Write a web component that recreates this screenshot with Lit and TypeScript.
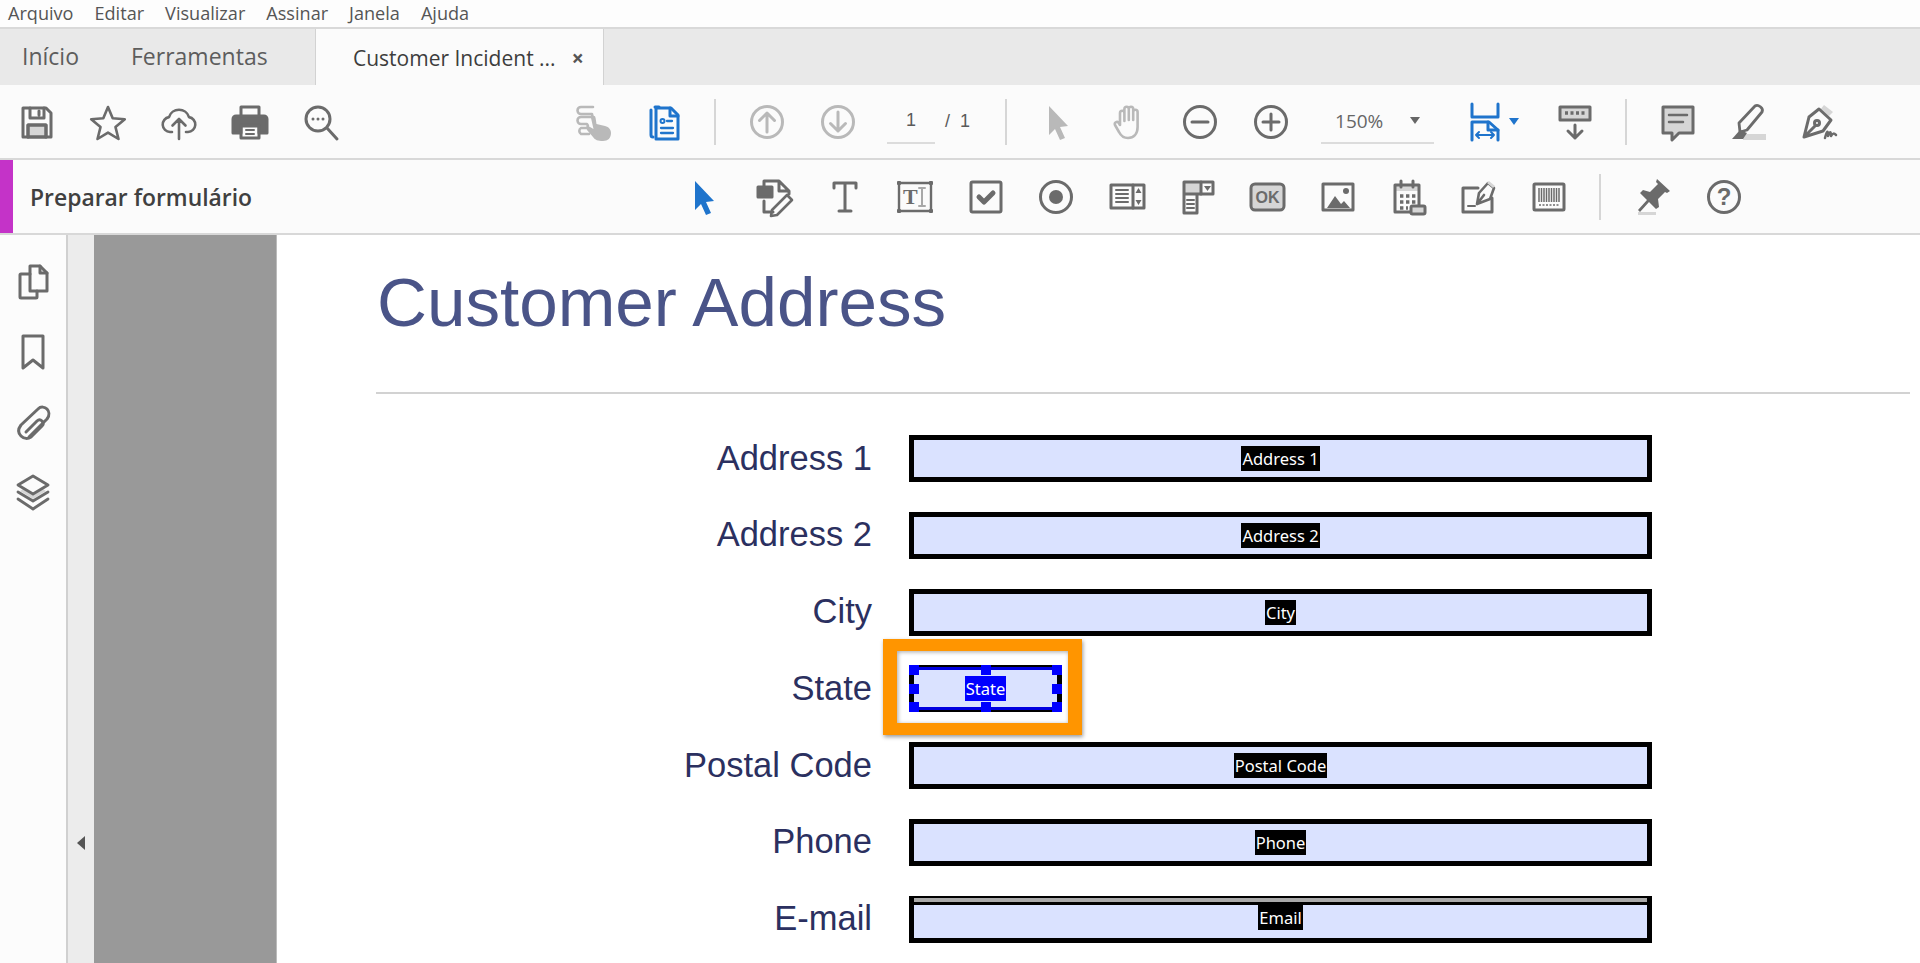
import { LitElement, html, css, svg } from "lit";
import { customElement } from "lit/decorators.js";

// icons are drawn on a 36x36 box; stroke comes from .ic, .fill paints with currentColor
const icons: Record<string, any> = {
  save: svg`<path class="lt" d="M9 21h18v12H9z"/><path d="M4 4h23l5 5v24H4z"/><path d="M11 4v10h14V4M20 7v4M9 33V21h18v12"/>`,
  star: svg`<path stroke-width="2.6" d="M18 3l4.7 11.3 12.1.9-9.3 7.9 3 11.9L18 28.600 7.500 35l3-11.900-9.300-7.900 12.100-.9z"/>`,
  cloud: svg`<path stroke-width="2.6" d="M11 28H9a7.500 7.500 0 0 1-1-14.900 10.500 10.500 0 0 1 20 0A7.500 7.500 0 0 1 27 28h-2M18 35V15M11.500 21.500L18 15l6.500 6.500"/>`,
  print: svg`<path d="M9 12V3h18v9"/><path class="fill" d="M4 12h28a3 3 0 0 1 3 3v14h-8v-8H9v8H1V15a3 3 0 0 1 3-3z"/><path d="M9 22h18v12H9z"/><path stroke-width="2" d="M14 26h8M14 30h8"/>`,
  search: svg`<circle cx="15" cy="15" r="12"/><path d="M24 24l10 11"/><g class="fill nost"><circle cx="10" cy="15" r="1.500"/><circle cx="15" cy="15" r="1.500"/><circle cx="20" cy="15" r="1.500"/></g>`,
  touch: svg`<path stroke-width="2.600" d="M18 3H6a3.500 3.500 0 0 0 0 7h11a3.500 3.500 0 0 1 0 3H6a3.500 3.500 0 0 0 0 7h6a3 3 0 0 1 0 4H6a3.500 3.500 0 0 0 0 6h8"/><path class="fill nost" d="M16 14a2.300 2.300 0 0 1 4.600 0l.9 6 8.500 2c4 1 6 4 6 7 0 5-3 8-8 8-5 0-8-1-10-4l-6-7c-1-2 1-4 3-3l3.500 2z"/>`,
  forms: svg`<path d="M5 6v25a2 2 0 0 0 2 2M9 3h4"/><path d="M10 4h15l7 7v24H10z"/><path d="M24 4v8h8"/><path stroke-width="2.300" d="M15 24h12M15 29h12M21 17h5"/><circle cx="16.500" cy="17" r="2" stroke-width="2"/>`,
  up: svg`<circle cx="18" cy="18" r="15.500"/><path d="M18 28V9M10.500 16.500L18 9l7.500 7.500"/>`,
  down: svg`<circle cx="18" cy="18" r="15.500"/><path d="M18 8v19M10.500 19.500L18 27l7.500-7.500"/>`,
  arrow: svg`<path class="fill nost" d="M9 2l19 20-8 1 5 11-5 2-5-11-6 6z"/>`,
  hand: svg`<path stroke-width="2.600" d="M9 21V9a2.200 2.200 0 0 1 4.400 0v8M13.400 16V5a2.200 2.200 0 0 1 4.400 0v11M17.800 16V5a2.200 2.200 0 0 1 4.400 0v11M22.200 16V8a2.200 2.200 0 0 1 4.400 0v15c0 7-4 11-9.600 11-5 0-7.500-3-9-6l-4-7c-1-2.500 2-4 3.500-2.500L9 21"/>`,
  minus: svg`<circle cx="18" cy="18" r="15.500"/><path d="M10 18h16"/>`,
  plus: svg`<circle cx="18" cy="18" r="15.500"/><path d="M10 18h16M18 10v16"/>`,
  fit: svg`<path d="M5 0v13h26V0M5 36V18h17l9 8v10"/><path d="M21 18v8h10"/><path stroke-width="2" d="M9 31h18M12 28l-3 3 3 3M24 28l3 3-3 3"/>`,
  scan: svg`<path class="lt" d="M3 3h30v13H3z"/><path stroke="#6b6b6b" stroke-width="3.500" stroke-dasharray="3 2.500" stroke-linecap="butt" d="M8 9h21"/><path d="M18 21v13M11 27l7 7 7-7"/>`,
  comment: svg`<path class="lt" d="M3 3h30v26H19l-7 7v-7H3z"/><path stroke-width="2.500" d="M9 11h18M9 18h14"/>`,
  marker: svg`<path class="lt nost" d="M12 30h23v6H12z"/><path stroke-width="2.800" d="M8 19L24 2c3-2 9 2 7 6L16 26l-7 2z"/><path class="fill nost" d="M9 26l-8 9h11l4-6z"/>`,
  sign: svg`<path class="lt nost" d="M22 1l9 7-4 4-9-6z"/><path d="M17 5L7 13 2 33l19-6 8-11zM3 32l10-10"/><circle cx="15" cy="19" r="2.500"/><path stroke-width="2.500" d="M23 34c2-8 3-8 3-2 2-5 3-5 3 0 2-3 3-3 5-1"/>`,
  editdoc: svg`<path class="fill" d="M1 8h14v10H1z"/><path d="M7 7V2h15l10 10v3M22 2v10h10M7 22v11h9"/><path stroke-width="2.600" d="M30 16l5 5-15 15-6 1 1-6z"/>`,
  tee: svg`<path d="M7 9V4h22v5M18 4v28M12 32h12"/>`,
  textfield: svg`<path stroke-width="2.400" d="M2 4h32v28H2z"/><path class="fill" stroke-width="2" d="M1 3h2v2H1zM33 3h2v2h-2zM1 31h2v2H1zM33 31h2v2h-2z"/><text x="6" y="25" class="g s">T</text><path class="off" stroke-width="2" d="M25 9v18M22 9h6M22 27h6"/>`,
  check: svg`<rect x="3" y="3" width="30" height="30" rx="1.500"/><path stroke-width="5" d="M11 18l5 5 9-9"/>`,
  radio: svg`<circle cx="18" cy="18" r="15.500"/><circle class="fill nost" cx="18" cy="18" r="7"/>`,
  listbox: svg`<path d="M2 6h33v23H2z"/><path d="M24 6v23"/><path stroke-width="2" d="M7 11h12M7 15h12M7 19h12M7 23h12"/><path class="fill nost" d="M29.500 9l3 5h-6zM29.500 26l3-5h-6z"/>`,
  combo: svg`<path class="lt nost" d="M5 3h17v12H5z"/><path d="M5 3h29v12H5zM5 15h13v19H5z"/><path d="M22 3v12"/><path class="fill nost" d="M25 7h7l-3.500 5z"/><path stroke-width="2" d="M8 21h7M8 25h7M8 29h7"/>`,
  ok: svg`<rect class="lt" x="2" y="5" width="33" height="26" rx="4"/><text x="18.500" y="24" text-anchor="middle" class="g ok">OK</text>`,
  image: svg`<path d="M3 5h30v26H3z"/><path class="fill nost" d="M7 29l8-12 6 8 3-3 6 7z"/><circle class="fill nost" cx="26" cy="12" r="3"/>`,
  cal: svg`<path class="lt nost" d="M5 6h24v6H5z"/><path d="M5 6h24v27H5zM11 2v6M23 2v6"/><path stroke-width="3.400" stroke-linecap="butt" stroke-dasharray="3.400 2.600" d="M10 17h16M10 23h16M10 29h8"/><rect class="lt" x="21" y="27" width="14" height="8" rx="1.500"/>`,
  signfield: svg`<path d="M18 9H3v24h29V19"/><path stroke-width="2" d="M8 27h7"/><path stroke-width="2.600" d="M17 25l2-11 9-10 6 5-4 11zM17 25l7-9"/><path class="lt nost" d="M29 2l6 5-2 2-6-5z"/>`,
  barcode: svg`<rect x="3" y="5" width="30" height="26" rx="1"/><path stroke-width="1.500" stroke-linecap="butt" d="M8 9v14M10.500 9v14M13 9v14M15.500 9v14M18 9v14M20.500 9v14M23 9v14M25.500 9v14M28 9v14"/><path stroke-width="1.500" stroke-linecap="butt" stroke-dasharray="2 1.500" d="M8 26h20"/>`,
  pin: svg`<path class="lt nost" d="M3 33h18v3H3z"/><path class="fill nost" d="M22 0l13 12-3 2-2-1-7 7 1 8-3 2-7-7-9 10-2-2 9-10-7-7 3-3 7 2 8-8-2-2z"/>`,
  help: svg`<circle cx="18" cy="18" r="15.500"/><text x="18" y="26" text-anchor="middle" class="g q">?</text>`,
  pages: svg`<path d="M15 2h10l7 7v18H15z"/><path d="M25 2v7h7"/><path d="M15 10H6a1 1 0 0 0-1 1v22a1 1 0 0 0 1 1h15a1 1 0 0 0 1-1v-6"/>`,
  bookmark: svg`<path d="M8 2h20v32l-10-8-10 8z"/>`,
  clip: svg`<path d="M14 33l18-18c3-4 2-8 0-10s-6-3-9 0L6 21c-3 4-3 8 0 11s7 3 10 1l11-11c2-2 1-4 0-5s-3-2-5 0L11 28"/>`,
  layers: svg`<path class="lt nost" d="M8 15l10 6 10-6 3 2-13 8L5 17z"/><path stroke-width="2.800" d="M18 2l15 9-15 9-15-9zM3 18l15 9 15-9M3 25l15 10 15-10"/>`,
};

const ic = (name: string, cls = "") =>
  html`<svg class="ic ${cls}" viewBox="0 0 36 36">${icons[name]}</svg>`;

const cell = (name: string, cls = "") => html`<span class="cell">${ic(name, cls)}</span>`;

@customElement("app-root")
export class AppRoot extends LitElement {
  static styles = css`
    :host {
      display: block;
      width: 1920px;
      height: 963px;
      overflow: hidden;
      background: #fff;
      font-family: "Open Sans", "Noto Sans", sans-serif;
      color: #4b4b4b;
    }
    .menu {
      height: 29px;
      display: flex;
      align-items: center;
      gap: 21px;
      padding: 0 0 2px 8px;
      box-sizing: border-box;
      background: #fdfdfd;
      font-size: 18.100px;
      color: #555;
      border-bottom: 2px solid #d9d9d9;
    }
    .tabs {
      height: 56px;
      display: flex;
      background: #e9e9e9;
      font-size: 23px;
      color: #5d5d5d;
    }
    .tab {
      display: flex;
      align-items: center;
      padding-bottom: 2px;
      box-sizing: border-box;
    }
    .tab.home { margin-left: 22px; width: 109px; }
    .tab.tools { width: 184px; }
    .tab.doc {
      width: 289px;
      padding: 2px 0 0 37px;
      gap: 16px;
      background: #fbfbfb;
      border-left: 1px solid #d2d2d2;
      border-right: 1px solid #d2d2d2;
      font-size: 21px;
      color: #3d3d3d;
    }
    .close { font-size: 21px; font-weight: 700; color: #555; }
    .bar {
      display: flex;
      align-items: center;
      background: #fbfbfb;
      border-bottom: 2px solid #d8d8d8;
      box-sizing: border-box;
    }
    .bar.top { height: 75px; padding-left: 1px; }
    .bar.form { height: 75px; }
    .cell {
      width: 71px;
      flex: none;
      display: flex;
      justify-content: center;
    }
    .bar.form .cell { width: 70.400px; }
    .ic {
      width: 36px;
      height: 36px;
      flex: none;
      fill: none;
      stroke: currentColor;
      stroke-width: 3;
      stroke-linejoin: round;
      stroke-linecap: round;
      color: #6b6b6b;
      overflow: visible;
    }
    .ic .fill { fill: currentColor; }
    .ic .lt { fill: #d6d6d6; }
    .ic .nost { stroke: none; }
    .ic .g {
      fill: currentColor;
      stroke: none;
      font-family: "Liberation Sans", sans-serif;
    }
    .ic .s { font-family: "Liberation Serif", serif; font-weight: 700; font-size: 22px; }
    .ic .ok { font-weight: 700; font-size: 16px; }
    .ic .q { font-size: 24px; font-weight: 700; }
    .off { color: #b9b9b9; }
    .ic .off { stroke: #a8a8a8; }
    .blue { color: #1f74cc; }
    .sep {
      width: 2px;
      height: 46px;
      flex: none;
      background: #d6d6d6;
      margin: 0 15px;
    }
    .left-gap { width: 201px; flex: none; }
    .pager {
      display: flex;
      align-items: center;
      margin-left: 14px;
      margin-right: 20px;
      font-size: 18px;
      font-family: "Liberation Sans", sans-serif;
      color: #5a5a5a;
    }
    .pager .num {
      width: 48px;
      height: 44px;
      display: flex;
      align-items: center;
      justify-content: center;
      border-bottom: 2px solid #dcdcdc;
      box-sizing: border-box;
      margin-right: 10px;
    }
    .zoom {
      width: 113px;
      height: 44px;
      margin: 0 16px 0 15px;
      box-sizing: border-box;
      padding: 0 14px;
      display: flex;
      align-items: center;
      justify-content: space-between;
      border-bottom: 2px solid #dcdcdc;
      font-size: 19px;
      color: #666;
    }
    .caret {
      width: 0;
      height: 0;
      border-left: 5.500px solid transparent;
      border-right: 5.500px solid transparent;
      border-top: 7px solid #666;
    }
    .caret.b { border-top-color: #1f74cc; margin-left: 6px; }
    .fitwrap { display: flex; align-items: center; width: 89px; padding-left: 17px; box-sizing: border-box; }
    .purple { width: 13px; height: 100%; background: #c433c8; flex: none; }
    .form-title {
      width: 656px;
      padding: 2px 0 0 17px;
      box-sizing: border-box;
      font-size: 22.900px;
      font-weight: 600;
      color: #404040;
    }
    .form .sep { margin: 0 17px 0 15px; }
    .main { display: flex; height: 729px; }
    .side {
      width: 68px;
      flex: none;
      box-sizing: border-box;
      background: #fcfcfc;
      border-right: 2px solid #d0d0d0;
      padding-top: 29px;
      display: flex;
      flex-direction: column;
      align-items: center;
      gap: 34px;
    }
    .strip {
      width: 26px;
      flex: none;
      background: #ececec;
      display: flex;
      align-items: flex-end;
      justify-content: center;
      padding-bottom: 114px;
      box-sizing: border-box;
    }
    .strip i {
      border-top: 7px solid transparent;
      border-bottom: 7px solid transparent;
      border-right: 8px solid #555;
    }
    .gray { width: 183px; flex: none; box-sizing: border-box; background: #999; border-right: 1px solid #bbb; }
    .page {
      flex: 1;
      padding: 0 10px 0 99px;
      font-family: "Liberation Sans", Arial, sans-serif;
    }
    h1 {
      margin: 0;
      height: 159px;
      box-sizing: border-box;
      padding: 25px 0 0 1px;
      font-size: 69.200px;
      line-height: 84px;
      font-weight: 400;
      color: #4a5488;
      border-bottom: 2px solid #d2d2d2;
    }
    .rows {
      padding-top: 41px;
      display: grid;
      grid-template-columns: 496px 743px;
      column-gap: 37px;
      row-gap: 29.800px;
      grid-auto-rows: 47px;
      align-items: center;
    }
    .lbl { text-align: right; font-size: 34.500px; line-height: 40px; padding-bottom: 2px; color: #2b3060; }
    .field {
      height: 47px;
      box-sizing: border-box;
      border: 5px solid #000;
      background: #dae2ff;
      display: flex;
      align-items: center;
      justify-content: center;
      position: relative;
    }
    .field.email {
      border-top-width: 2px;
      background: linear-gradient(#a9a9a9 0 4px, #000 4px 7px, #dae2ff 7px);
    }
    .tag {
      background: #000;
      color: #fff;
      font-family: "Noto Sans", sans-serif;
      font-size: 16.500px;
      line-height: 25px;
      padding: 0 1px;
    }
    .field.state {
      width: 153px;
      border: solid #000;
      border-width: 2px 5px;
      box-shadow: inset 0 3px 0 #0000e0, inset 0 -3px 0 #0000e0;
    }
    .state .tag { background: #0000ff; }
    .h {
      position: absolute;
      width: 10px;
      height: 10px;
      background: #0000ff;
    }
    .h.l { left: -5px; }
    .h.c { left: 50%; margin-left: -5px; }
    .h.r { right: -5px; }
    .h.t { top: -2px; }
    .h.m { top: 50%; margin-top: -5px; }
    .h.b { bottom: -2px; }
    .mark {
      position: absolute;
      left: -31px;
      top: -28px;
      width: 199px;
      height: 96px;
      box-sizing: border-box;
      border: solid #ff9500;
      border-width: 12px 14px;
      box-shadow: 1px 2px 4px rgba(0, 0, 0, 0.4), inset 1px 1px 4px rgba(0, 0, 0, 0.35);
    }
  `;

  render() {
    const rows = ["Address 1", "Address 2", "City", "State", "Postal Code", "Phone", "E-mail"];
    const tags: Record<string, string> = { "E-mail": "Email" };
    return html`
      <div class="menu">
        ${["Arquivo", "Editar", "Visualizar", "Assinar", "Janela", "Ajuda"].map((m) => html`<span>${m}</span>`)}
      </div>
      <div class="tabs">
        <div class="tab home">Início</div>
        <div class="tab tools">Ferramentas</div>
        <div class="tab doc"><span>Customer Incident ...</span><span class="close">×</span></div>
      </div>
      <div class="bar top">
        ${cell("save")}${cell("star")}${cell("cloud")}${cell("print")}${cell("search")}
        <span class="left-gap"></span>
        ${cell("touch", "off")}${cell("forms", "blue")}
        <span class="sep"></span>
        ${cell("up", "off")}${cell("down", "off")}
        <div class="pager"><span class="num">1</span><span>/ &nbsp;1</span></div>
        <span class="sep"></span>
        ${cell("arrow", "off")}${cell("hand", "off")}${cell("minus")}${cell("plus")}
        <div class="zoom"><span>150%</span><span class="caret"></span></div>
        <div class="fitwrap">${ic("fit", "blue")}<span class="caret b"></span></div>
        ${cell("scan")}
        <span class="sep"></span>
        ${cell("comment")}${cell("marker")}${cell("sign")}
      </div>
      <div class="bar form">
        <span class="purple"></span>
        <div class="form-title">Preparar formulário</div>
        ${cell("arrow", "blue")}${cell("editdoc")}${cell("tee")}${cell("textfield")}${cell("check")}${cell("radio")}
        ${cell("listbox")}${cell("combo")}${cell("ok")}${cell("image")}${cell("cal")}${cell("signfield")}${cell("barcode")}
        <span class="sep"></span>
        ${cell("pin")}${cell("help")}
      </div>
      <div class="main">
        <div class="side">${ic("pages")}${ic("bookmark")}${ic("clip")}${ic("layers")}</div>
        <div class="strip"><i></i></div>
        <div class="gray"></div>
        <div class="page">
          <h1>Customer Address</h1>
          <div class="rows">
            ${rows.map((r) => html`
              <div class="lbl">${r}</div>
              ${r === "State"
                ? html`<div class="field state">
                    <span class="tag">State</span>
                    ${["l t", "c t", "r t", "l m", "r m", "l b", "c b", "r b"].map((p) => html`<i class="h ${p}"></i>`)}
                    <div class="mark"></div>
                  </div>`
                : html`<div class="field ${r === "E-mail" ? "email" : ""}"><span class="tag">${tags[r] ?? r}</span></div>`}
            `)}
          </div>
        </div>
      </div>
    `;
  }
}
